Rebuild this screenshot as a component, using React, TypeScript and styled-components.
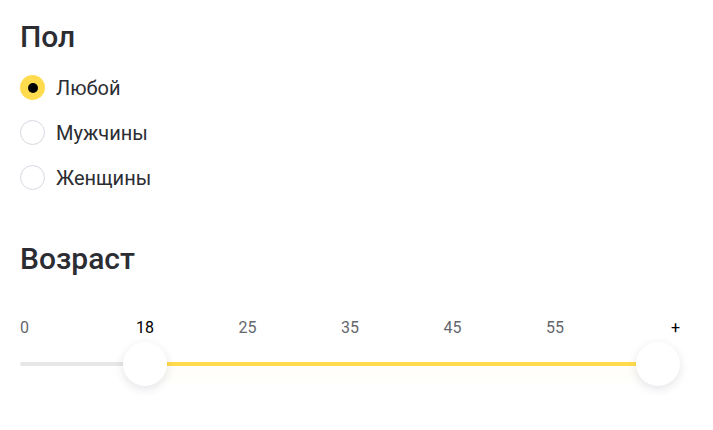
import React, { useState } from 'react';
import styled, { createGlobalStyle } from 'styled-components';

const GlobalStyle = createGlobalStyle`
  body {
    margin: 0;
    background: #ffffff;
    font-family: Roboto, "Open Sans", Arial, sans-serif;
    color: #2b2d33;
  }
`;

const Page = styled.div`
  width: 713px;
  height: 430px;
  padding: 18px 20px 0 20px;
  box-sizing: border-box;
  display: flex;
  flex-direction: column;
`;

const Title = styled.h2`
  margin: 0;
  font-size: 30px;
  line-height: 38px;
  font-weight: 500;
  color: #2b2d33;
`;

const RadioList = styled.div`
  display: flex;
  flex-direction: column;
  gap: 20px;
  margin-top: 19px;
`;

const RadioRow = styled.label`
  display: flex;
  align-items: center;
  gap: 11px;
  height: 25px;
  cursor: pointer;
  font-size: 20px;
  color: #2b2d33;
`;

const RadioCircle = styled.span<{ $checked: boolean }>`
  width: 25px;
  height: 25px;
  box-sizing: border-box;
  border-radius: 50%;
  display: flex;
  align-items: center;
  justify-content: center;
  background: ${p => (p.$checked ? '#ffdb4d' : '#ffffff')};
  border: ${p => (p.$checked ? 'none' : '1px solid #d5d9e0')};

  &::after {
    content: '';
    display: ${p => (p.$checked ? 'block' : 'none')};
    width: 10px;
    height: 10px;
    border-radius: 50%;
    background: #000000;
  }
`;

const AgeSection = styled.div`
  margin-top: 50px;
`;

const Ticks = styled.div`
  width: 660px;
  display: grid;
  grid-template-columns: 1fr repeat(5, 102.5px) 1fr;
  margin-top: 40px;
  font-size: 16px;
  line-height: 20px;
`;

const Tick = styled.span<{ $align: 'start' | 'center' | 'end'; $active?: boolean }>`
  justify-self: ${p => p.$align};
  color: ${p => (p.$active ? '#000000' : '#65676d')};
`;

const Slider = styled.div`
  position: relative;
  width: 660px;
  height: 44px;
  margin-top: 4px;
`;

const Track = styled.div`
  position: absolute;
  left: 0;
  right: 0;
  top: 20px;
  height: 4px;
  border-radius: 2px;
  background: #e6e6e6;
`;

const Fill = styled.div`
  position: absolute;
  top: 20px;
  height: 4px;
  background: #ffdb4d;
  box-shadow: 0 8px 14px rgba(255, 219, 77, 0.12);
`;

const Thumb = styled.div`
  position: absolute;
  top: 0;
  width: 44px;
  height: 44px;
  margin-left: -22px;
  border-radius: 50%;
  background: #ffffff;
  box-shadow: 0 3px 10px rgba(40, 50, 70, 0.13);
`;

const genders = ['Любой', 'Мужчины', 'Женщины'];
const ticks = ['0', '18', '25', '35', '45', '55', '+'];

const EDGE = 73.75;
const COL = 102.5;
const WIDTH = 660;

// center x of a tick inside the slider
const tickX = (i: number) => {
  if (i === 0) return 22;
  if (i === ticks.length - 1) return WIDTH - 22.5;
  return EDGE + (i - 1) * COL + COL / 2;
};

export default function App() {
  const [gender, setGender] = useState(0);
  const [range] = useState<[number, number]>([1, 6]);
  const from = tickX(range[0]);
  const to = tickX(range[1]);

  return (
    <Page>
      <GlobalStyle />
      <Title>Пол</Title>
      <RadioList>
        {genders.map((g, i) => (
          <RadioRow key={g} onClick={() => setGender(i)}>
            <RadioCircle $checked={gender === i} />
            {g}
          </RadioRow>
        ))}
      </RadioList>

      <AgeSection>
        <Title>Возраст</Title>
        <Ticks>
          {ticks.map((t, i) => (
            <Tick
              key={t}
              $align={i === 0 ? 'start' : i === ticks.length - 1 ? 'end' : 'center'}
              $active={i === range[0] || i === range[1]}
            >
              {t}
            </Tick>
          ))}
        </Ticks>
        <Slider>
          <Track />
          <Fill style={{ left: from, width: to - from }} />
          <Thumb style={{ left: from }} />
          <Thumb style={{ left: to }} />
        </Slider>
      </AgeSection>
    </Page>
  );
}
